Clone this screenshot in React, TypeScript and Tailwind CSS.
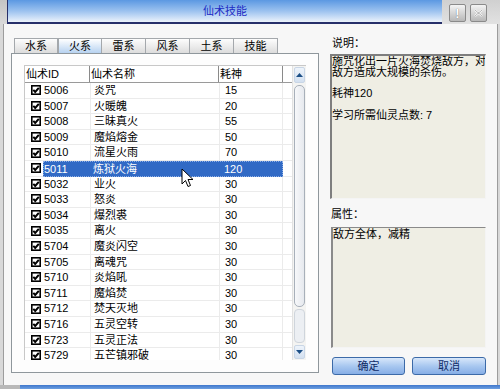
import React from "react";

const rows: [string, string, string][] = [
  ["5006", "炎咒", "15"],
  ["5007", "火暖魄", "20"],
  ["5008", "三昧真火", "55"],
  ["5009", "魔焰熔金", "50"],
  ["5010", "流星火雨", "70"],
  ["5011", "炼狱火海", "120"],
  ["5032", "业火", "30"],
  ["5033", "怒炎", "30"],
  ["5034", "爆烈裘", "30"],
  ["5035", "离火", "30"],
  ["5704", "魔炎闪空", "30"],
  ["5705", "离魂咒", "30"],
  ["5710", "炎焰吼", "30"],
  ["5711", "魔焰焚", "30"],
  ["5712", "焚天灭地", "30"],
  ["5716", "五灵空转", "30"],
  ["5723", "五灵正法", "30"],
  ["5729", "五芒镇邪破", "30"],
];

const tabs = ["水系", "火系", "雷系", "风系", "土系", "技能"];

function CheckBox() {
  return (
    <svg width="10" height="10" viewBox="0 0 10 10" className="shrink-0">
      <rect x="0.8" y="0.8" width="8.4" height="8.4" fill="white" stroke="black" strokeWidth="1.6" />
      <path d="M2.3 4.9 L4.2 7 L7.8 2.8" fill="none" stroke="black" strokeWidth="2" />
    </svg>
  );
}

function ScrollBar() {
  return (
    <div className="w-[14px] h-full flex flex-col bg-[#f4f4f2] border-l border-[#e2e2e2]">
      <div className="h-[16px] mt-[1px] mx-[1px] rounded-[2px] border border-[#c9d6e6] bg-gradient-to-b from-[#eef4fb] to-[#d3e0f0] flex items-center justify-center">
        <svg width="7" height="4" viewBox="0 0 7 4">
          <path d="M0 4 L3.5 0 L7 4 Z" fill="#1c4f86" />
        </svg>
      </div>
      <div className="h-[222px] mt-[2px] mx-[1px] rounded-[5px] border border-[#a8b0ba] bg-gradient-to-r from-[#f7f8fa] to-[#e6e9ee]" />
      <div className="flex-1 mx-[1px] my-[2px] rounded-[4px] border border-[#cfd5dc] bg-[#eceff3]" />
      <div className="h-[14px] mb-[1px] mx-[1px] rounded-[2px] border border-[#c9d6e6] bg-gradient-to-b from-[#eef4fb] to-[#d3e0f0] flex items-center justify-center">
        <svg width="7" height="4" viewBox="0 0 7 4">
          <path d="M0 0 L3.5 4 L7 0 Z" fill="#1c4f86" />
        </svg>
      </div>
    </div>
  );
}

function ListView() {
  return (
    <div className="ml-[12px] mt-[11px] w-[282px] h-[295px] flex border-l border-t border-[#c8c8c8] bg-white overflow-hidden">
      <div className="w-[268px] h-full flex flex-col">
        <div className="h-[17px] shrink-0 flex border-b border-[#9a9a9a] bg-white text-black">
          <div className="w-[65px] pl-[1px] leading-[16px] border-r border-[#8a8a8a]">仙术ID</div>
          <div className="w-[129px] pl-[1px] leading-[16px] border-r border-[#8a8a8a]">仙术名称</div>
          <div className="w-[64px] pl-[1px] leading-[16px] border-r border-[#8a8a8a]">耗神</div>
        </div>
        {rows.map(([id, name, cost]) => {
          const sel = id === "5011";
          return (
            <div key={id} className="h-[15.6px] shrink-0 flex items-stretch">
              <div className="w-[18px] pl-[6px] flex items-center border-b border-[#ebebeb]">
                <CheckBox />
              </div>
              <div
                className={
                  sel
                    ? "w-[240px] flex bg-[#316ac5] text-white outline outline-1 outline-dotted outline-[#8fb0e6] -outline-offset-1"
                    : "w-[240px] flex text-black border-b border-[#ebebeb]"
                }
              >
                <div className="w-[47px] pl-[1px] flex items-center">{id}</div>
                <div className={sel ? "w-[129px] pl-[3px] flex items-center" : "w-[129px] pl-[3px] flex items-center border-l border-[#ebebeb]"}>{name}</div>
                <div className={sel ? "w-[64px] pl-[5px] flex items-center" : "w-[64px] pl-[5px] flex items-center border-x border-[#ebebeb]"}>{cost}</div>
              </div>
              <div className="flex-1 border-b border-[#ebebeb]" />
            </div>
          );
        })}
      </div>
      <ScrollBar />
    </div>
  );
}

export default function App() {
  return (
    <div
      className="relative w-[500px] h-[389px] overflow-hidden bg-[#d3d3d3] text-[11px] text-black select-none"
      style={{ fontFamily: '"Liberation Sans", "Noto Sans CJK SC", sans-serif' }}
    >
      {/* title row */}
      <div className="flex h-[24px]">
        <div className="w-[7px] bg-gradient-to-b from-[#c4c4c4] to-[#dadada]" />
        <div className="w-[435px] flex items-center justify-center border-l border-b-2 border-[#27306a] bg-gradient-to-b from-[#5b98e2] via-[#9cc2ef] to-[#edf3fb] text-[#1d2bc4] text-[11px] leading-none">
          仙术技能
        </div>
        <div className="flex-1 flex items-start gap-[4px] pl-[7px] pt-[4px] bg-gradient-to-b from-[#d0d0d0] to-[#e2e2e2]">
          <div className="w-[17px] h-[18px] rounded-[2px] border border-[#8a8a8a] bg-gradient-to-b from-[#f4f4f4] to-[#b8b8b8] flex items-center justify-center text-white text-[13px] font-bold leading-none [text-shadow:0_0_1px_#555]">
            !
          </div>
          <div className="w-[17px] h-[18px] rounded-[2px] border border-[#8a8a8a] bg-gradient-to-b from-[#f4f4f4] to-[#b8b8b8] flex items-center justify-center">
            <svg width="9" height="8" viewBox="0 0 9 8">
              <path d="M1 1 L8 7 M8 1 L1 7" stroke="white" strokeWidth="2" />
              <path d="M1 1 L8 7 M8 1 L1 7" stroke="#7a7a7a" strokeWidth="0.6" />
            </svg>
          </div>
        </div>
      </div>

      {/* body */}
      <div className="flex h-[361px]">
        <div className="w-[4px] bg-[#d8d8d8] border-r border-[#9c9c9c]" />
        <div className="flex-1 flex gap-[11px] pl-[7px] pt-[14px] bg-[#f7f7f7]">
          {/* left: tabs */}
          <div className="w-[308px] flex flex-col">
            <div className="flex h-[15px] pl-[3px]">
              {tabs.map((t) => (
                <div
                  key={t}
                  className={
                    t === "火系"
                      ? "w-[44px] flex items-center justify-center border-x border-t border-[#a4a8ac] bg-gradient-to-b from-white to-[#b7d2f0] leading-none"
                      : "w-[44px] flex items-center justify-center border-r border-t border-[#a4a8ac] first:border-l bg-gradient-to-b from-[#fdfdfd] to-[#dcdcdc] leading-none"
                  }
                >
                  {t}
                </div>
              ))}
            </div>
            <div className="h-[320px] border border-[#8f979c] bg-[#fdfdfd]">
              <ListView />
            </div>
          </div>

          {/* right: description */}
          <div className="w-[156px] flex flex-col">
            <div className="h-[16px] pl-[2px] leading-[11px]">说明：</div>
            <div className="h-[145px] border-t-2 border-l-2 border-[#7e7e7e] border-r border-b border-r-[#f4f4f4] border-b-[#f4f4f4] bg-[#efeee4] leading-[10.8px] whitespace-nowrap overflow-hidden">
              <p>
                施咒化出一片火海焚烧敌方，对
                <br />
                敌方造成大规模的杀伤。
              </p>
              <p className="mt-[10.8px]">耗神120</p>
              <p className="mt-[10.8px]">学习所需仙灵点数: 7</p>
            </div>
            <div className="h-[28px] pt-[10px] pl-[1px] leading-[11px]">属性：</div>
            <div className="h-[121px] ml-[1px] border-t border-l-2 border-[#8a8a8a] border-r border-b border-r-[#f4f4f4] border-b-[#f4f4f4] bg-[#efeee4] leading-[12px]">
              敌方全体，减精
            </div>
            <div className="mt-[9px] flex justify-between pl-[2px]">
              <button className="w-[73px] h-[18px] rounded-[3px] border border-[#3c6aa8] bg-gradient-to-b from-[#d8e7fa] via-[#a9c8f0] to-[#86aee6] text-[#0e2a66] leading-none">
                确定
              </button>
              <button className="w-[74px] h-[18px] rounded-[3px] border border-[#3c6aa8] bg-gradient-to-b from-[#d8e7fa] via-[#a9c8f0] to-[#86aee6] text-[#0e2a66] leading-none">
                取消
              </button>
            </div>
          </div>
        </div>
        <div className="w-[3px] border-l border-[#9c9c9c] bg-[#d8d8d8]" />
      </div>

      {/* bottom frame */}
      <div className="flex h-[4px]">
        <div className="w-[20px] bg-[#b8b8b8]" />
        <div className="flex-1 bg-gradient-to-b from-[#3f77cc] to-[#6d9fe0]" />
      </div>

      {/* mouse cursor */}
      <svg className="absolute left-[181px] top-[168px]" width="13" height="20" viewBox="0 0 13 20">
        <path d="M1 1 L1 16 L4.5 12.5 L7 18.5 L9.5 17.5 L7 11.5 L12 11.5 Z" fill="white" stroke="black" strokeWidth="1" strokeLinejoin="round" />
      </svg>
    </div>
  );
}
